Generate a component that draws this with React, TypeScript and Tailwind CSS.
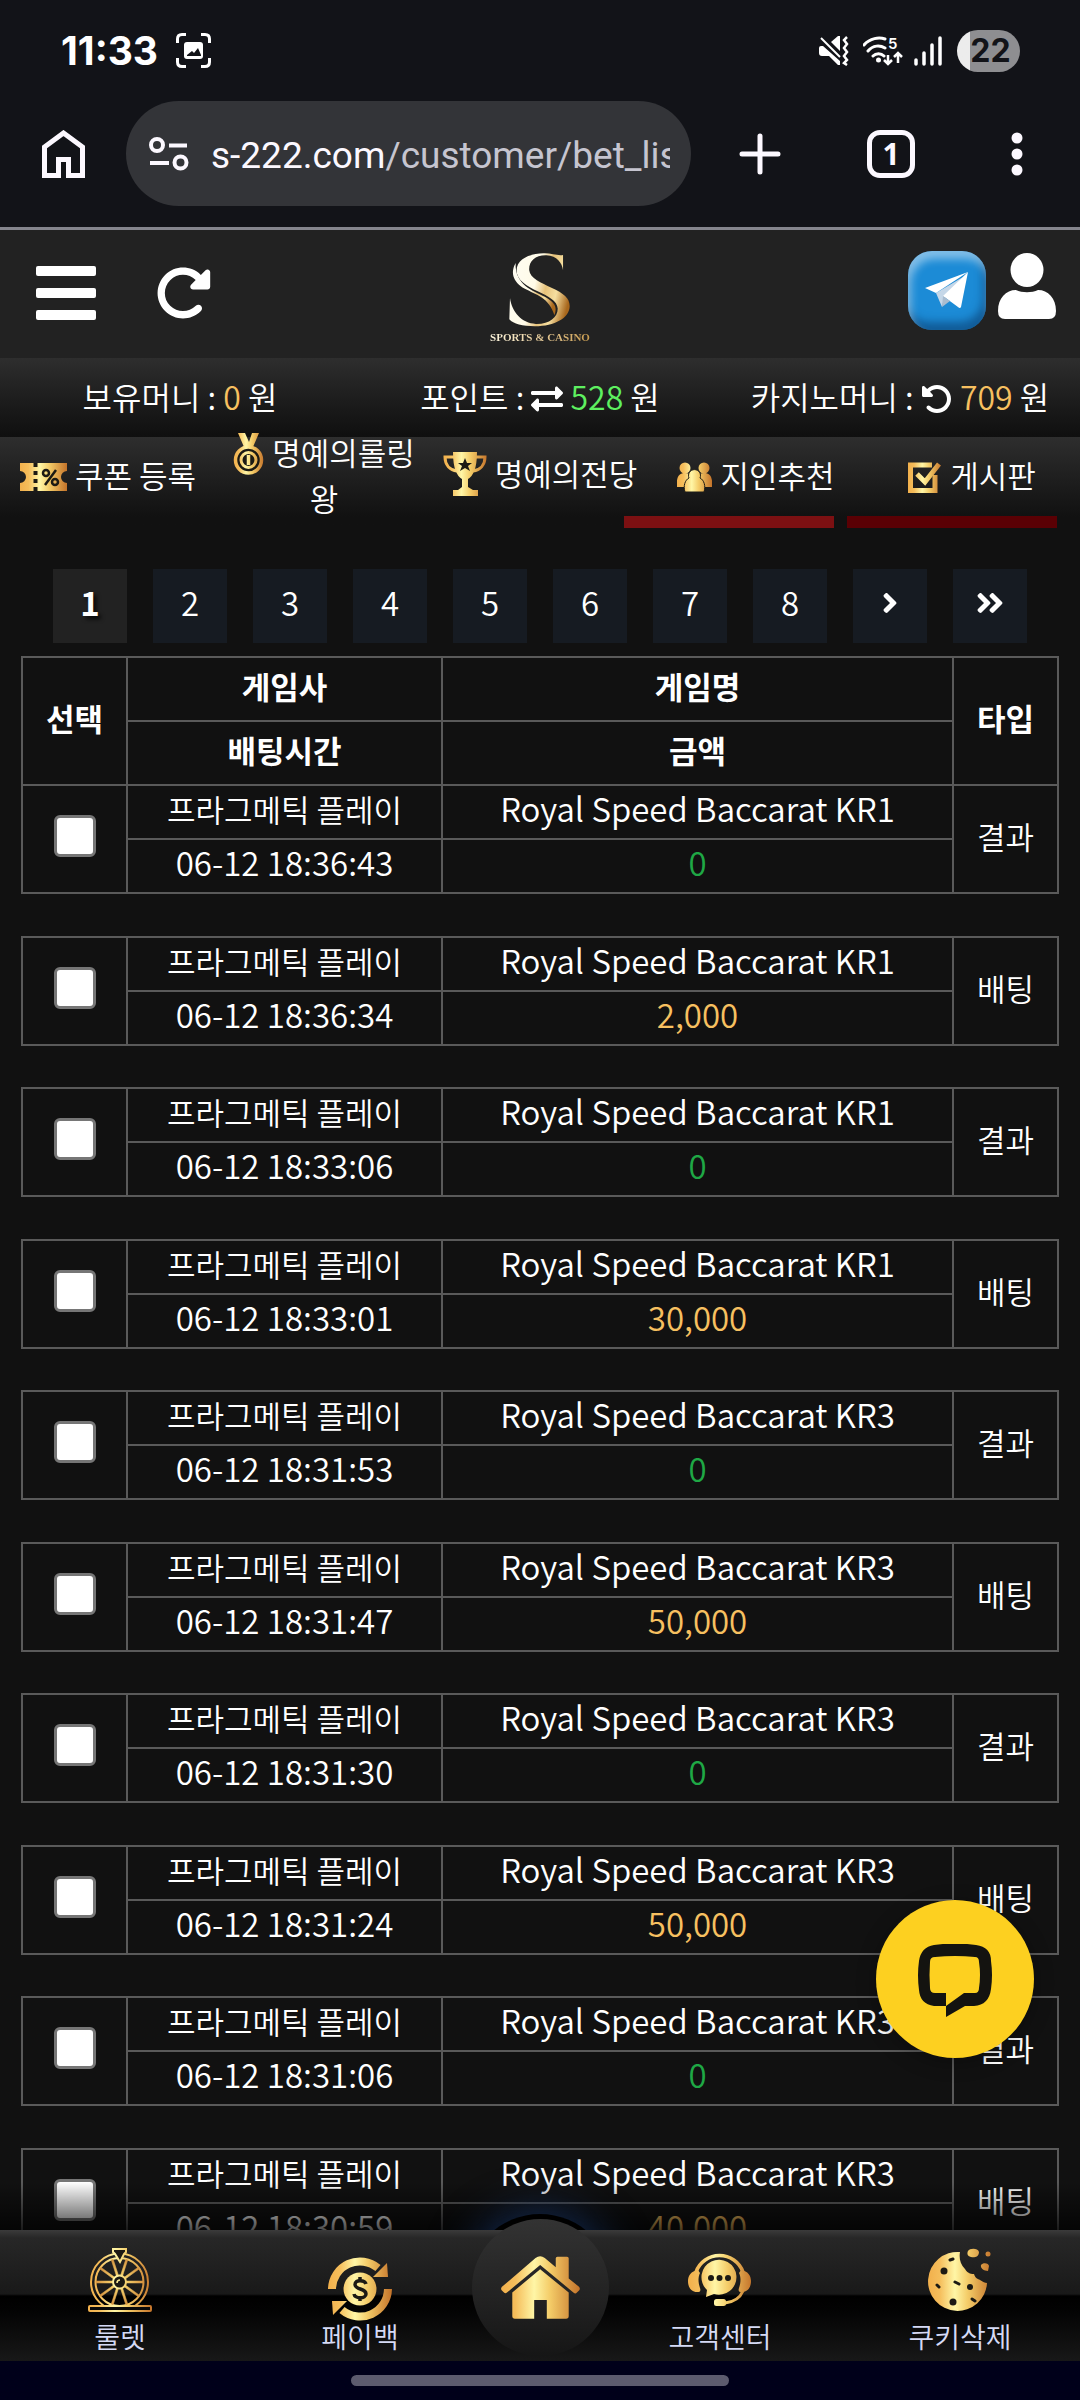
import type { ReactNode } from "react";
import { FaExchangeAlt, FaAngleRight, FaAngleDoubleRight } from "react-icons/fa";
import { FaRotateLeft, FaRotateRight } from "react-icons/fa6";

const DARK = "#1c1a14";

type GoldProps = {
  id: string;
  width: number;
  height: number;
  className: string;
  children: (fill: string) => ReactNode;
};

/** An icon painted with the horizontal gold gradient of the site. */
function Gold({ id, width, height, className, children }: GoldProps) {
  return (
    <svg viewBox={`0 0 ${width} ${height}`} className={className} aria-hidden="true">
      <defs>
        <linearGradient id={id} gradientUnits="userSpaceOnUse" x1="0" y1="0" x2={width} y2="0">
          <stop offset="0" stopColor="#f2b04c" />
          <stop offset="0.18" stopColor="#f5bd5b" />
          <stop offset="0.42" stopColor="#fff6a6" />
          <stop offset="0.62" stopColor="#f4cc68" />
          <stop offset="1" stopColor="#c4732a" />
        </linearGradient>
      </defs>
      {children(`url(#${id})`)}
    </svg>
  );
}

function TicketIcon() {
  return (
    <Gold id="gold-ticket" width={47} height={28} className="inline-block h-7 w-[47px]">
      {(g) => (
        <>
          <path d="M0 0H47V8A6 6 0 0 0 47 20V28H0V20A6 6 0 0 0 0 8Z" fill={g} />
          <path d="M15.500 0V28" stroke={DARK} strokeWidth="4" strokeDasharray="4 4" />
          <path d="M36 7L25 22" stroke={DARK} strokeWidth="2.500" />
          <circle cx="26" cy="10" r="3" fill="none" stroke={DARK} strokeWidth="2.500" />
          <circle cx="35" cy="19" r="3" fill="none" stroke={DARK} strokeWidth="2.500" />
        </>
      )}
    </Gold>
  );
}

function MedalIcon() {
  return (
    <Gold id="gold-medal" width={31} height={42} className="inline-block h-[42px] w-[31px]">
      {(g) => (
        <>
          <path d="M5 0H12L16 9L19 0H26L20 14H11Z" fill={g} />
          <circle cx="15.500" cy="27" r="13" fill={DARK} stroke={g} strokeWidth="3.500" />
          <circle cx="15.500" cy="27" r="7.500" fill={DARK} stroke={g} strokeWidth="3" />
          <path d="M15.500 22V32" stroke={g} strokeWidth="3.500" />
        </>
      )}
    </Gold>
  );
}

function TrophyIcon() {
  return (
    <Gold id="gold-trophy" width={44} height={44} className="inline-block size-11">
      {(g) => (
        <>
          <path d="M10 0H34C34 17 30 24 25 27V35L30 38H35V44H10V38H15L19 35V27C14 24 10 17 10 0Z" fill={g} />
          <path d="M11 5H2C2 13 7 18 14 19M33 5H42C42 13 37 18 30 19" fill="none" stroke={g} strokeWidth="3" />
          <path d="M22 6L24 11H29L25 14L27 19L22 16L17 19L19 14L15 11H20Z" fill={DARK} />
        </>
      )}
    </Gold>
  );
}

function PeopleIcon() {
  return (
    <Gold id="gold-people" width={35} height={30} className="inline-block h-[30px] w-[35px]">
      {(g) => (
        <>
          <circle cx="8" cy="6" r="5.500" fill={g} />
          <circle cx="27" cy="6" r="5.500" fill={g} />
          <path d="M0 25C-1 15 2 11 8 11C13 11 14 14 14 17L9 25ZM35 25C36 15 33 11 27 11C22 11 21 14 21 17L26 25Z" fill={g} />
          <path d="M8 30C6 24 8 18 12 16A6 6 0 1 1 23 16C27 18 29 24 27 30Z" fill={g} stroke={DARK} strokeWidth="1" />
        </>
      )}
    </Gold>
  );
}

function BoardIcon() {
  return (
    <Gold id="gold-board" width={34} height={32} className="inline-block h-8 w-[34px]">
      {(g) => (
        <>
          <path d="M27 14V29.500H2.500V4H24" fill="none" stroke={g} strokeWidth="5" />
          <path d="M9 13L17 21L31 3" fill="none" stroke={g} strokeWidth="5" />
        </>
      )}
    </Gold>
  );
}

function RouletteIcon() {
  const spokes = Array.from({ length: 10 }, (_, i) => i * 36);
  return (
    <Gold id="gold-roulette" width={64} height={64} className="size-16">
      {(g) => (
        <>
          <circle cx="31.500" cy="34" r="28.500" fill="none" stroke={g} strokeWidth="2" />
          <circle cx="31.500" cy="34" r="24" fill="none" stroke={g} strokeWidth="2" />
          {spokes.map((a) => (
            <path
              key={a}
              d="M38 33H55V35H38Z"
              fill={g}
              stroke={g}
              strokeWidth="0.500"
              transform={`rotate(${a} 31.500 34)`}
            />
          ))}
          <circle cx="31.500" cy="34" r="6.500" fill={DARK} stroke={g} strokeWidth="2" />
          <path d="M29 35A3 3 0 0 1 32 32" fill="none" stroke={g} strokeWidth="1.500" />
          <rect x="1" y="58" width="62" height="5" rx="1" fill="#0a0a0a" stroke={g} strokeWidth="2" />
          <path d="M25 1H38V4L36 6L32 14L27 6L25 4Z" fill={DARK} stroke={g} strokeWidth="2" />
        </>
      )}
    </Gold>
  );
}

function PaybackIcon() {
  return (
    <Gold id="gold-payback" width={64} height={64} className="size-16">
      {(g) => (
        <>
          <path d="M4 32A28 28 0 0 1 50 11" fill="none" stroke={g} strokeWidth="8" />
          <path d="M59 6L60 20L45 20Z" fill={g} />
          <path d="M60 32A28 28 0 0 1 14 53" fill="none" stroke={g} strokeWidth="8" />
          <path d="M5 58L4 44L19 44Z" fill={g} />
          <circle cx="32" cy="32" r="16.500" fill={g} />
          <path
            d="M38 27C37 23 27 22 27 27.500C27 33 38 31 38 37C38 42 27 42 26 37M32 20V24M32 40V44"
            fill="none"
            stroke={DARK}
            strokeWidth="3.500"
          />
        </>
      )}
    </Gold>
  );
}

function SupportIcon() {
  return (
    <Gold id="gold-support" width={64} height={54} className="h-[54px] w-16">
      {(g) => (
        <>
          <path d="M8 19A25 25 0 0 1 55 19" fill="none" stroke={g} strokeWidth="3.500" />
          <path d="M10 17C3 18 0 23 0 28C0 34 3 39 9 39C12 39 13 38 12 35C10 29 10 24 12 20Z" fill={g} />
          <path d="M53 17C60 18 63 23 63 28C63 34 60 39 54 39C51 39 50 38 51 35C53 29 53 24 51 20Z" fill={g} />
          <path d="M55 38C52 45 46 49 37 50" fill="none" stroke={g} strokeWidth="3" />
          <rect x="26" y="46" width="12" height="7" rx="2.500" fill={g} />
          <path d="M18 44L19 37A17.500 17.500 0 1 1 26 41Z" fill={g} />
          <circle cx="23" cy="25" r="3" fill={DARK} />
          <circle cx="31.500" cy="25" r="3" fill={DARK} />
          <circle cx="40" cy="25" r="3" fill={DARK} />
        </>
      )}
    </Gold>
  );
}

function CookieIcon() {
  return (
    <Gold id="gold-cookie" width={64} height={64} className="size-16">
      {(g) => (
        <>
          <path
            d="M32 4C31 10 32 16 37 21C40 26 44 26 46 26C47 30 50 31 52 32C55 34 57 35 59 35A29.500 29.500 0 1 1 32 4Z"
            fill={g}
          />
          <path d="M40 3C42 0 50 0 51 4C51 9 46 10 43 9C39 8 39 5 40 3Z" fill={g} />
          <circle cx="60" cy="6" r="2.500" fill={g} />
          <path d="M53 17C55 14 61 15 61 18L60 23C56 23 52 20 53 17Z" fill={g} />
          <circle cx="16" cy="23" r="3.500" fill={DARK} />
          <circle cx="42" cy="39" r="3" fill={DARK} />
          <circle cx="25" cy="54" r="3.500" fill={DARK} />
          <path d="M22 12L25 11M9 37L11 39M27 34L31 36M44 51L47 53" stroke={DARK} strokeWidth="3" strokeLinecap="round" />
        </>
      )}
    </Gold>
  );
}

function GoldHomeIcon() {
  return (
    <Gold id="gold-home" width={238} height={188} className="h-[63px] w-[79px]">
      {(g) => (
        <>
          <path
            d="M3 92L104 5Q118 -5 132 5L165 33V6Q165 1 170 1H199Q204 1 204 6V67L235 92Q240 98 235 103L228 110Q224 114 218 109L118 26L18 109Q13 114 9 109L2 102Q-2 97 3 92Z"
            fill={g}
          />
          <path d="M34 109L118 39L204 109V180Q204 188 196 188H138V132H100V188H42Q34 188 34 180Z" fill={g} />
        </>
      )}
    </Gold>
  );
}

function StatusBar() {
  return (
    <div className="flex h-[101px] items-center justify-between pl-[61px] pr-[60px]">
      <div className="flex items-center gap-[18px]">
        <time className="font-[Inter,sans-serif] text-[39px] leading-none font-bold text-white">11:33</time>
        <svg viewBox="0 0 35 35" className="size-[35px]" aria-hidden="true">
          <path
            d="M1.500 10V6Q1.500 1.500 6 1.500H10M25 1.500H29Q33.500 1.500 33.500 6V10M33.500 25V29Q33.500 33.500 29 33.500H25M10 33.500H6Q1.500 33.500 1.500 29V25"
            fill="none"
            stroke="#fff"
            strokeWidth="3"
          />
          <rect x="8" y="9" width="19" height="17" rx="3" fill="#fff" />
          <path d="M11 22L16 18L18 20L22 15L25 22V23H11Z" fill="#121318" />
        </svg>
      </div>
      <div className="flex items-center gap-[14px]">
        <svg viewBox="0 0 30 30" className="size-[30px]" aria-hidden="true">
          <path d="M2 10H4L21 25V29H19L10 20H3Q0 20 0 17V12Q0 10 2 10Z" fill="#fff" />
          <path d="M12 6L19 0H21V15Z" fill="#fff" />
          <path d="M2 2L21 21" stroke="#fff" strokeWidth="2" />
          <path d="M28 1L25 4L28 8L25 12L28 16L25 20L28 24L25 27L28 29" fill="none" stroke="#fff" strokeWidth="2.500" />
        </svg>
        <svg viewBox="0 0 40 30" className="h-[30px] w-10" aria-hidden="true">
          <path
            d="M1 9C7 2 16 1 22 3M5 15C10 9 17 9 22 12M10 20C13 17 18 17 21 20"
            fill="none"
            stroke="#fff"
            strokeWidth="3"
            strokeLinecap="round"
          />
          <circle cx="15.500" cy="24" r="2.500" fill="#fff" />
          <text x="25" y="13" fill="#fff" fontSize="15" fontWeight="600" fontFamily="Inter, sans-serif">
            5
          </text>
          <path d="M25 19V28M21 24L25 28L29 24M35 27V18M31 21L35 17L39 21" fill="none" stroke="#fff" strokeWidth="2.500" />
        </svg>
        <svg viewBox="0 0 30 30" className="-ml-1 size-[30px]" aria-hidden="true">
          <path d="M3 24V28M11 17V28M19 9V28M27 2V28" stroke="#fff" strokeWidth="3.500" strokeLinecap="round" />
        </svg>
        <span className="flex h-[42px] w-[63px] items-center justify-center rounded-full bg-linear-to-r from-[#ececec] from-20% to-[#8e8e91] to-20% pl-1 font-[Inter,sans-serif] text-[32px] font-bold text-[#121318]">
          22
        </span>
      </div>
    </div>
  );
}

function BrowserBar() {
  return (
    <div className="flex h-[129px] items-start border-b-[3px] border-[#85858d]">
      <button type="button" aria-label="홈" className="flex h-[105px] w-[126px] shrink-0 items-center justify-center">
        <svg viewBox="0 0 43 48" className="h-12 w-[43px]" aria-hidden="true">
          <path
            d="M2.500 17L21.500 3L40.500 17V45.500H26.500V29.500H16.500V45.500H2.500Z"
            fill="none"
            stroke="#fcf8ff"
            strokeWidth="5"
          />
        </svg>
      </button>
      <button
        type="button"
        aria-label="주소창"
        className="flex h-[105px] min-w-0 flex-1 items-center gap-[22px] rounded-full bg-[#333438] pr-[21px] pl-[23px]"
      >
        <svg viewBox="0 0 40 34" className="h-[34px] w-10 shrink-0" aria-hidden="true">
          <g fill="none" stroke="#fcf8ff" strokeWidth="4">
            <circle cx="8" cy="8" r="6" />
            <circle cx="31.500" cy="25.500" r="6" />
            <path d="M20 8.500H38M1 26H20" />
          </g>
        </svg>
        <span className="min-w-0 flex-1 overflow-hidden pt-1 text-left font-[Roboto,sans-serif] text-[37px] font-normal whitespace-nowrap text-[#fcf8ff]">
          s-222.com<span className="text-[#c6c5d0]">/customer/bet_list</span>
        </span>
      </button>
      <button type="button" aria-label="새 탭" className="flex h-[105px] w-[138px] shrink-0 items-center justify-center">
        <svg viewBox="0 0 42 42" className="size-[42px]" aria-hidden="true">
          <path d="M21 3V39M3 21H39" stroke="#fcf8ff" strokeWidth="5" strokeLinecap="round" />
        </svg>
      </button>
      <button type="button" aria-label="탭 1개" className="flex h-[105px] w-[124px] shrink-0 items-center justify-center">
        <span className="flex size-12 items-center justify-center rounded-[13px] border-[5px] border-[#fcf8ff] font-['Noto_Sans',sans-serif] text-[30px] leading-none font-bold text-[#fcf8ff]">
          1
        </span>
      </button>
      <button type="button" aria-label="메뉴 더보기" className="flex h-[105px] w-[127px] shrink-0 items-center justify-center">
        <svg viewBox="0 0 12 44" className="h-11 w-3" aria-hidden="true">
          <g fill="#fcf8ff">
            <circle cx="6" cy="6" r="5.500" />
            <circle cx="6" cy="22" r="5.500" />
            <circle cx="6" cy="38" r="5.500" />
          </g>
        </svg>
      </button>
    </div>
  );
}

function Logo() {
  return (
    <a href="#home" className="flex flex-col items-center pt-1.5">
      <svg viewBox="84 34 190 224" className="h-[75px] w-[63px]" aria-hidden="true">
        <defs>
          <linearGradient id="logo-gold" x1="0" y1="0.300" x2="1" y2="0.600">
            <stop offset="0" stopColor="#fffdf2" />
            <stop offset="0.420" stopColor="#fffbe8" />
            <stop offset="0.600" stopColor="#e6c27a" />
            <stop offset="0.780" stopColor="#f6dfa0" />
            <stop offset="1" stopColor="#a8671c" />
          </linearGradient>
        </defs>
        <path
          d="M250 88C247 66 232 45 200 43C165 42 146 62 148 88C150 112 185 126 215 141C252 158 270 172 270 196C270 232 225 257 165 257C128 257 100 250 88 236L90 172C96 215 126 248 168 250C208 251 234 230 234 204C233 180 205 166 175 152C140 136 110 118 110 88C110 55 150 36 195 37C215 37 235 45 250 42Z"
          fill="url(#logo-gold)"
        />
        <path
          d="M107 66C92 92 96 122 135 144C168 162 208 170 224 224C234 198 224 184 195 168C160 150 104 132 107 66Z"
          fill="url(#logo-gold)"
        />
      </svg>
      <span className="mt-1 bg-linear-to-r from-[#fff8e0] to-[#c99c4e] bg-clip-text font-['Liberation_Serif',serif] text-[11px] leading-3 font-bold whitespace-nowrap text-transparent">
        SPORTS &amp; CASINO
      </span>
    </a>
  );
}

function SiteHeader() {
  return (
    <header className="grid h-32 grid-cols-3 items-center bg-[#222]">
      <div className="flex items-center gap-[58px] pb-0.5 pl-9 text-white">
        <button type="button" aria-label="메뉴">
          <svg viewBox="0 0 60 54" className="h-[54px] w-[60px]" aria-hidden="true">
            <rect width="60" height="10" rx="2" fill="#fff" />
            <rect y="22" width="60" height="10" rx="2" fill="#fff" />
            <rect y="44" width="60" height="10" rx="2" fill="#fff" />
          </svg>
        </button>
        <button type="button" aria-label="새로고침">
          <FaRotateRight className="size-[58px]" />
        </button>
      </div>
      <div className="flex justify-center">
        <Logo />
      </div>
      <div className="flex items-center justify-end gap-3 pr-6">
        <a
          href="#telegram"
          aria-label="텔레그램"
          className="mb-2 flex h-[79px] w-[78px] items-center justify-center rounded-[24px] bg-[#1c8bd6] shadow-[inset_3px_8px_8px_rgba(255,255,255,0.45),inset_-3px_-8px_8px_rgba(10,60,110,0.6)]"
        >
          <svg viewBox="0 0 44 37" className="h-[37px] w-11" aria-hidden="true">
            <path d="M11 21L38 5L19 26L17 35Z" fill="#c5d7e8" />
            <path d="M0 16L43 0L11 21Z" fill="#fff" />
            <path d="M43 0L36 35Q35 37 33 35L18 24Z" fill="#fff" />
            <path d="M17 35L18 24L25 29Z" fill="#a9bccf" />
          </svg>
        </a>
        <a href="#account" aria-label="내 정보" className="mb-4">
          <svg viewBox="0 0 58 66" className="h-[66px] w-[58px]" aria-hidden="true">
            <ellipse cx="29" cy="17" rx="16.500" ry="17" fill="#fff" />
            <path d="M0 58C0 45 8 37 18 37C24 40 34 40 40 37C50 37 58 45 58 58Q58 66 51 66H7Q0 66 0 58Z" fill="#fff" />
          </svg>
        </a>
      </div>
    </header>
  );
}

function BalanceBar() {
  return (
    <section className="grid h-[79px] grid-cols-3 items-center bg-linear-to-b from-[#2e2e2e] to-[#0f0f0f] pb-1 text-center text-[32px]">
      <p>
        보유머니 : <span className="text-[#f7c060]">0</span> 원
      </p>
      <p>
        포인트 : <FaExchangeAlt className="mb-1 inline-block size-8 text-white" />{" "}
        <span className="text-[#5ef060]">528</span> 원
      </p>
      <p>
        카지노머니 : <FaRotateLeft className="mb-1 inline-block size-8 text-white" />{" "}
        <span className="text-[#f7c060]">709</span> 원
      </p>
    </section>
  );
}

const shortcuts = [
  { label: "쿠폰 등록", icon: <TicketIcon />, href: "#coupon" },
  { label: "명예의롤링왕", icon: <MedalIcon />, href: "#rolling" },
  { label: "명예의전당", icon: <TrophyIcon />, href: "#fame" },
  { label: "지인추천", icon: <PeopleIcon />, href: "#invite" },
  { label: "게시판", icon: <BoardIcon />, href: "#board" },
];

function ShortcutMenu() {
  return (
    <nav className="bg-linear-to-b from-[#2e2e2e] to-[#111] to-[80px]">
      <ul className="grid h-[79px] grid-cols-5 grid-rows-[76px] items-center text-center text-[31px] leading-[42px]">
        {shortcuts.map((s) => (
          <li key={s.label} className="[&_svg]:mr-2 [&_svg]:-mt-1 [&_svg]:mb-0.5 [&_svg]:align-middle">
            <a href={s.href} className="block px-1 break-all">
              {s.icon}
              {s.label}
            </a>
          </li>
        ))}
      </ul>
      <div className="flex h-3 justify-end gap-[13px] pr-[23px]">
        <span className="w-[210px] bg-[#7c1012]" />
        <span className="w-[210px] bg-[#5a0004]" />
      </div>
    </nav>
  );
}

const pages = ["2", "3", "4", "5", "6", "7", "8"];

function Pagination() {
  return (
    <nav aria-label="페이지" className="mt-[41px] flex justify-center gap-[26px] text-[33px]">
      <button
        type="button"
        aria-current="page"
        className="flex size-[74px] items-center justify-center bg-[#222] pb-1.5 font-bold [text-shadow:3px_3px_4px_rgba(0,0,0,0.8)]"
      >
        1
      </button>
      {pages.map((p) => (
        <button key={p} type="button" className="flex size-[74px] items-center justify-center bg-[#161b22] pb-1.5">
          {p}
        </button>
      ))}
      <button type="button" aria-label="다음" className="flex size-[74px] items-center justify-center bg-[#161b22] pb-1.5">
        <FaAngleRight className="size-8" />
      </button>
      <button type="button" aria-label="마지막" className="flex size-[74px] items-center justify-center bg-[#161b22] pb-1.5">
        <FaAngleDoubleRight className="size-8" />
      </button>
    </nav>
  );
}

type Bet = { game: string; time: string; amount: string; kind: string };

const bets: Bet[] = [
  { game: "Royal Speed Baccarat KR1", time: "06-12 18:36:43", amount: "0", kind: "결과" },
  { game: "Royal Speed Baccarat KR1", time: "06-12 18:36:34", amount: "2,000", kind: "배팅" },
  { game: "Royal Speed Baccarat KR1", time: "06-12 18:33:06", amount: "0", kind: "결과" },
  { game: "Royal Speed Baccarat KR1", time: "06-12 18:33:01", amount: "30,000", kind: "배팅" },
  { game: "Royal Speed Baccarat KR3", time: "06-12 18:31:53", amount: "0", kind: "결과" },
  { game: "Royal Speed Baccarat KR3", time: "06-12 18:31:47", amount: "50,000", kind: "배팅" },
  { game: "Royal Speed Baccarat KR3", time: "06-12 18:31:30", amount: "0", kind: "결과" },
  { game: "Royal Speed Baccarat KR3", time: "06-12 18:31:24", amount: "50,000", kind: "배팅" },
  { game: "Royal Speed Baccarat KR3", time: "06-12 18:31:06", amount: "0", kind: "결과" },
  { game: "Royal Speed Baccarat KR3", time: "06-12 18:30:59", amount: "40,000", kind: "배팅" },
];

const koreanCell = "border-2 border-[#5a5a5a] px-0 pt-0 pb-1.5";
const latinCell = "border-2 border-[#5a5a5a] px-0 pt-0 pb-2 text-[33px]";

function BetTable() {
  return (
    <div className="mt-[13px] px-[21px]">
      <table className="w-full table-fixed border-collapse text-center text-[31px] leading-10">
        <colgroup>
          <col className="w-[105px]" />
          <col className="w-[315px]" />
          <col />
          <col className="w-[105px]" />
        </colgroup>
        <thead>
          <tr className="h-16">
            <th rowSpan={2} className={koreanCell}>
              선택
            </th>
            <th className={koreanCell}>게임사</th>
            <th className={koreanCell}>게임명</th>
            <th rowSpan={2} className={koreanCell}>
              타입
            </th>
          </tr>
          <tr className="h-16">
            <th className={koreanCell}>배팅시간</th>
            <th className={koreanCell}>금액</th>
          </tr>
        </thead>
        {bets.map((bet) => (
          <tbody key={bet.time} className="group">
            <tr className="h-[54px]">
              <td rowSpan={2} className={koreanCell}>
                <input
                  type="checkbox"
                  aria-label={`${bet.time} 선택`}
                  className="mx-auto block size-[42px] appearance-none rounded-[6px] border-[3px] border-[#767676] bg-white"
                />
              </td>
              <td className={koreanCell}>프라그메틱 플레이</td>
              <td className={latinCell}>{bet.game}</td>
              <td rowSpan={2} className={koreanCell}>
                {bet.kind}
              </td>
            </tr>
            <tr className="h-[54px]">
              <td className={latinCell}>{bet.time}</td>
              <td className={latinCell}>
                <span className={bet.amount === "0" ? "text-[#1fa845]" : "text-[#f7c060]"}>{bet.amount}</span>
              </td>
            </tr>
            <tr>
              <td colSpan={4} className="h-11 p-0 group-even:h-[43px]" />
            </tr>
          </tbody>
        ))}
      </table>
    </div>
  );
}

function BottomNav() {
  return (
    <nav className="relative isolate flex h-[131px] text-[28px] text-[#d5daf5]">
      <div className="absolute inset-x-0 -top-12 -z-20 h-12 bg-linear-to-b from-transparent to-black/70" />
      <div className="absolute -top-4 left-1/2 -z-20 size-[146px] -translate-x-1/2 rounded-full bg-black shadow-[0_0_44px_rgba(25,60,120,0.75)]" />
      <div className="absolute inset-0 -z-10 bg-[linear-gradient(to_bottom,#3b3b3b_0,#272727_8px,#191919_64px,#000_66px,#030303_80px,#181818_100%)]" />
      <a href="#roulette" className="flex flex-1 basis-0 flex-col items-center pt-[18px]">
        <RouletteIcon />
        <span className="mt-1 leading-10">룰렛</span>
      </a>
      <a href="#payback" className="flex flex-1 basis-0 flex-col items-center pt-[27px]">
        <PaybackIcon />
        <span className="-mt-[5px] leading-10">페이백</span>
      </a>
      <div className="flex w-[120px] justify-center">
        <a
          href="#main"
          aria-label="메인"
          className="-mt-[11px] flex size-[137px] shrink-0 items-center justify-center rounded-full bg-linear-to-b from-[#333] to-[#161616]"
        >
          <GoldHomeIcon />
        </a>
      </div>
      <a href="#support" className="flex flex-1 basis-0 flex-col items-center pt-[23px]">
        <SupportIcon />
        <span className="mt-[9px] leading-10">고객센터</span>
      </a>
      <a href="#cookies" className="flex flex-1 basis-0 flex-col items-center pt-[18px]">
        <CookieIcon />
        <span className="mt-1 leading-10">쿠키삭제</span>
      </a>
    </nav>
  );
}

function ChatButton() {
  return (
    <button
      type="button"
      aria-label="상담 채팅"
      className="fixed right-[46px] bottom-[342px] flex size-[158px] items-center justify-center rounded-full bg-[#fdd020] pt-1 shadow-[0_4px_20px_rgba(0,0,0,0.3)]"
    >
      <svg viewBox="0 0 74 74" className="size-[74px]" aria-hidden="true">
        <path
          d="M16 1Q37 -2 58 1Q73 3 73 17Q75 31 73 45Q71 61 56 62H47L28 73V62H16Q2 60 1 46Q-1 31 1 17Q3 3 16 1Z"
          fill="#141310"
        />
        <path d="M17 13Q37 11 57 13Q61 13 61 18Q63 31 61 44Q61 49 57 49H46L28 62V49H17Q12 49 12 44Q11 31 12 18Q12 13 17 13Z" fill="#fdd020" />
      </svg>
    </button>
  );
}

export default function App() {
  return (
    <div className="flex h-screen flex-col bg-[#111] font-['Noto_Sans_CJK_KR',sans-serif] font-[350] text-white">
      <div className="shrink-0 bg-[#121318]">
        <StatusBar />
        <BrowserBar />
      </div>
      <SiteHeader />
      <BalanceBar />
      <ShortcutMenu />
      <main className="min-h-0 flex-1 overflow-y-auto [scrollbar-width:none]">
        <Pagination />
        <BetTable />
      </main>
      <BottomNav />
      <div className="relative z-10 flex h-[39px] shrink-0 items-center justify-center bg-[#00001a]">
        <span className="h-[11px] w-[35%] rounded-full bg-[#5c5b6e]" />
      </div>
      <ChatButton />
    </div>
  );
}
